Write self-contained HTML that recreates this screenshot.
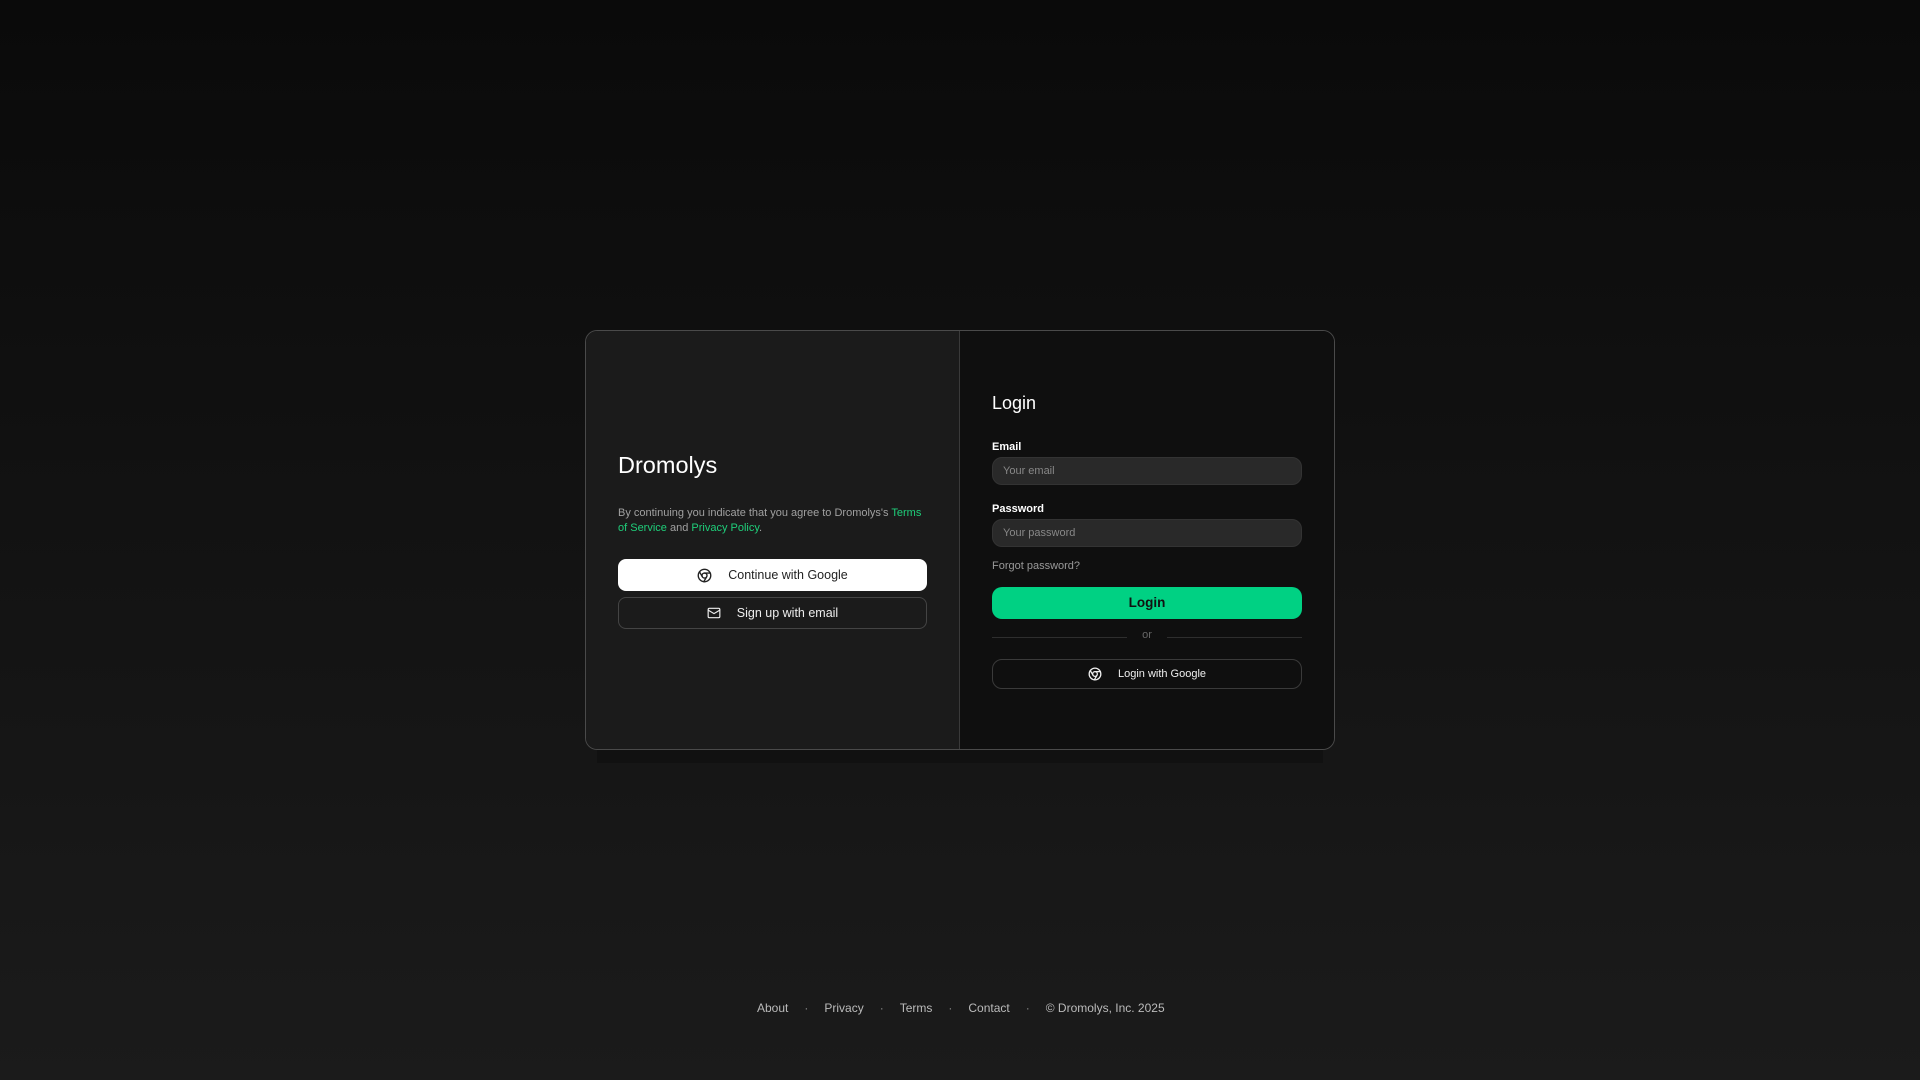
<!DOCTYPE html>
<html><head><meta charset="utf-8"><style>
*{box-sizing:border-box;margin:0;padding:0}
body{width:1920px;height:1080px;overflow:hidden;font-family:"Liberation Sans",sans-serif;background:linear-gradient(#0a0a0a,#1b1b1b);position:relative;color:#fff}
.card{position:absolute;left:585px;top:330px;width:750px;height:420px;border:1px solid #4a4a4a;border-radius:12px;display:flex;overflow:hidden}
.shadow{position:absolute;left:597px;top:750px;width:726px;height:13px;background:#111}
.left{width:374px;background:#1b1b1b;border-right:1px solid #3a3a3a;padding:0 32px;position:relative}
.right{flex:1;background:#0f0f0f;position:relative}
h1{position:absolute;left:32px;top:121px;font-size:23.5px;font-weight:400;color:#fff}
.p{position:absolute;left:32px;top:175px;width:310px;font-size:11px;line-height:15px;color:#a0a0a0}
.p a{color:#1fce7a;text-decoration:none}
.btn{position:absolute;left:32px;width:309px;height:32px;border-radius:8px;display:flex;align-items:center;justify-content:center;font-size:12.5px}
.g{top:228px;background:#fff;color:#222}
.e{top:266px;border:1px solid #444;color:#eee;height:32px}
.btn svg{margin-right:16px}
.r{position:absolute;left:32px;width:310px}
.t{top:62px;font-size:18px;color:#fff}
.lab{font-size:11px;font-weight:700;color:#fff}
.inp{height:28px;border-radius:10px;background:#292929;border:1px solid #333;font-size:11px;color:#888;padding:0 10px;line-height:26px}
.login{top:256px;height:32px;border-radius:10px;background:#00d183;color:#111;font-weight:700;font-size:13.5px;text-align:center;line-height:32px}
.or{top:298px;height:14px;font-size:11px;color:#666;text-align:center}
.or:before,.or:after{content:"";position:absolute;top:8px;height:1px;width:135px;background:#2e2e2e}
.or:before{left:0}.or:after{right:0}
.lg{top:328px;height:30px;border:1px solid #3a3a3a;border-radius:10px;display:flex;align-items:center;justify-content:center;font-size:11px;color:#eee}
.lg svg{margin-right:16px}
.foot{position:absolute;top:1001px;left:757px;font-size:12px;color:#bbb;white-space:nowrap}
.foot span.d{margin:0 16px;color:#888}
</style></head><body>
<div class="shadow"></div>
<div class="card">
<div class="left">
<h1>Dromolys</h1>
<div class="p">By continuing you indicate that you agree to Dromolys's <a>Terms of Service</a> and <a>Privacy Policy</a>.</div>
<div class="btn g"><svg width="15" height="15" viewBox="0 0 24 24" fill="none" stroke="#222" stroke-width="2.2" stroke-linecap="round"><circle cx="12" cy="12" r="10"/><circle cx="12" cy="12" r="4"/><path d="M21.2 8H12M3.95 6.06 8.54 14M10.88 21.94 15.46 14"/></svg>Continue with Google</div>
<div class="btn e"><svg width="14" height="14" viewBox="0 0 24 24" fill="none" stroke="#eee" stroke-width="2"><rect x="2" y="4" width="20" height="16" rx="2"/><path d="m22 7-10 6L2 7"/></svg>Sign up with email</div>
</div>
<div class="right">
<div class="r t">Login</div>
<div class="r lab" style="top:110px">Email</div>
<div class="r inp" style="top:126px">Your email</div>
<div class="r lab" style="top:172px">Password</div>
<div class="r inp" style="top:188px">Your password</div>
<div class="r" style="top:229px;font-size:11px;color:#999">Forgot password?</div>
<div class="r login">Login</div>
<div class="r or">or</div>
<div class="r lg"><svg width="14" height="14" viewBox="0 0 24 24" fill="none" stroke="#eee" stroke-width="2.2" stroke-linecap="round"><circle cx="12" cy="12" r="10"/><circle cx="12" cy="12" r="4"/><path d="M21.2 8H12M3.95 6.06 8.54 14M10.88 21.94 15.46 14"/></svg>Login with Google</div>
</div>
</div>
<div class="foot">About<span class="d">·</span>Privacy<span class="d">·</span>Terms<span class="d">·</span>Contact<span class="d">·</span>© Dromolys, Inc. 2025</div>
</body></html>
